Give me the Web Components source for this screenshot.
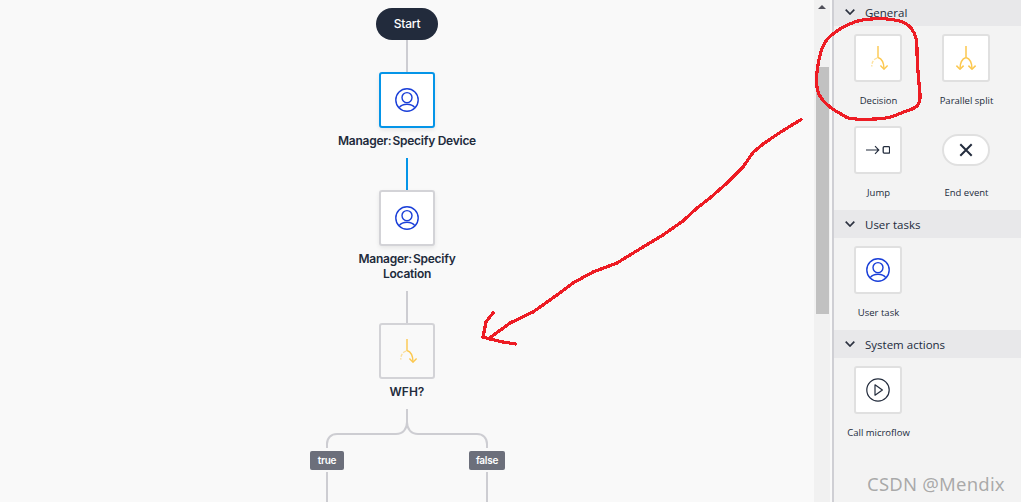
<!DOCTYPE html>
<html lang="en"><head><meta charset="utf-8"><title>Workflow editor</title>
<style>html,body{margin:0;height:502px;overflow:hidden;background:#f9f9f9}</style></head>
<body>
<x-app></x-app>
<script>
const ICONS={
user:`<svg width="24" height="24" viewBox="0 0 24 24" fill="none" stroke="#1a3fd8" stroke-width="1.4"><circle cx="12" cy="12" r="11.2"/><circle cx="12" cy="9.6" r="5"/><path d="M4.2 19.6C6 17.2 8.6 16.3 12 16.3s6 .9 7.8 3.3"/></svg>`,
decision:`<svg width="24" height="24" viewBox="0 0 24 24" fill="none" stroke="#fcc84f" stroke-width="1.4"><path d="M12 0v11.5c3.6 1.2 6 3.6 6 11.5"/><path d="M14.4 19.6l3.6 3.6 3.6-3.6"/><path d="M11 12.2c-3 1-5.2 3.2-5.2 8.2" stroke-opacity=".55" stroke-dasharray="3.2 1.4"/></svg>`,
split:`<svg width="24" height="24" viewBox="0 0 24 24" fill="none" stroke="#fcc84f" stroke-width="1.5"><path d="M12 0v11.5c3.6 1.2 6 3.6 6 11.5M12 11.5C8.4 12.7 6 15.1 6 23"/><path d="M14.4 19.6l3.6 3.6 3.6-3.6M2.4 19.6L6 23.2l3.6-3.6"/></svg>`,
jump:`<svg width="24" height="24" viewBox="0 0 24 24" fill="none" stroke="#232c3d" stroke-width="1.1"><path d="M0 12h12.6M9 8.2l3.8 3.8-3.8 3.8"/><rect x="17.2" y="8.7" width="6.4" height="6.4" rx="1" stroke-width="1.3"/></svg>`,
end:`<svg width="24" height="24" viewBox="0 0 24 24" fill="none" stroke="#232c3d" stroke-width="2"><path d="M6.3 6.3l11.4 11.4M17.7 6.3L6.3 17.7"/></svg>`,
play:`<svg width="24" height="24" viewBox="0 0 24 24" fill="none" stroke="#232c3d" stroke-width="1.2"><circle cx="12" cy="12" r="11.2"/><path d="M9 6.8l7.4 5.2L9 17.2z" stroke-linejoin="round"/></svg>`
};
function def(name,css,html){
  customElements.define(name,class extends HTMLElement{
    connectedCallback(){
      if(this.shadowRoot)return;
      const r=this.attachShadow({mode:'open'});
      r.innerHTML=`<style>${css}</style>`+(typeof html==='function'?html(this):html);
    }
  });
}
const SANS='Inter,"Liberation Sans",sans-serif', UI='"Open Sans","Noto Sans",sans-serif';
function smooth(p){
  const m=(a,b)=>[(a[0]+b[0])/2,(a[1]+b[1])/2];
  const s=m(p[p.length-1],p[0]);
  let d=`M${s[0]} ${s[1]}`;
  p.forEach((q,i)=>{const e=m(q,p[(i+1)%p.length]);d+=`Q${q[0]} ${q[1]} ${e[0]} ${e[1]}`});
  return d+'Z';
}
const RING=[[858,20],[877,18.5],[892,19],[907,23],[915,33],[917,43],[917,60],[919,83],[921,106],[903,112],[887,119],[850,119.500],[843,115],[830,108],[818,95],[816,80],[818,63],[823,43],[837,30]];

def('x-icon',':host{display:block;width:24px;height:24px}svg{display:block}',h=>ICONS[h.getAttribute('name')]);

def('x-start',`:host{display:flex;align-items:center;justify-content:center;box-sizing:border-box;width:62px;height:32px;padding-bottom:2px;margin-top:8px;border-radius:16px;background:#222b3c;color:#fff;font:500 12px/15px ${SANS};letter-spacing:-.2px;flex:none}`,'<slot></slot>');

def('x-connector',`:host{display:block;width:2px;height:32px;background:#cdcdd2;flex:none}:host([active]){background:#0595e8}`,'');

def('x-node',`:host{display:flex;flex-direction:column;align-items:center;width:130px;flex:none}
.box{box-sizing:border-box;width:56px;height:56px;display:flex;align-items:center;justify-content:center;background:#fff;border:2px solid #d3d3d7;border-radius:3px;box-shadow:0 2px 4px rgba(0,0,0,.08)}
:host([selected]) .box{border-color:#0595e8}
:host([plain]) .box{background:#f9f9f9;box-shadow:none}
.label{padding:5px 0 10px;text-align:center;font:600 12px/15px ${SANS};color:#222b3c}
:host([tight]) .label{letter-spacing:-.26px}
:host([wide]){width:170px}`,
h=>`<div class="box"><x-icon name="${h.getAttribute('icon')}"></x-icon></div><div class="label"><slot></slot></div>`);

def('x-thin',`:host{display:inline;word-spacing:-1.6px}`,'<slot></slot>');

def('x-fork',`:host{display:block;width:164px;height:39px;flex:none}svg{display:block}`,
`<svg width="164" height="39" fill="none" stroke="#cdcdd2" stroke-width="2"><path d="M82 0v13c0 7-4 12-11 12H12c-6 0-10 4-10 10v4M82 13c0 7 4 12 11 12h59c6 0 10 4 10 10v4"/></svg>`);

def('x-branch',`:host{display:flex;flex-direction:column;align-items:center;width:160px}
.tag{box-sizing:border-box;min-width:34px;height:19px;padding:0 7px;margin-top:3px;display:flex;align-items:center;justify-content:center;border-radius:2px;background:#6c6f7b;color:#fff;font:600 10px/19px ${SANS};letter-spacing:-.25px}
.line{width:2px;height:40px;margin-top:2px;background:#cdcdd2}`,
`<div class="tag"><slot></slot></div><div class="line"></div>`);

def('x-row',`:host{display:flex;flex:none}`,'<slot></slot>');

def('x-canvas',`:host{display:flex;flex-direction:column;align-items:center;width:814px;height:502px;overflow:hidden;background:#f9f9f9;flex:none}`,'<slot></slot>');

def('x-scrollbar',`:host{display:flex;flex-direction:column;align-items:center;box-sizing:border-box;width:16px;height:502px;background:#f1f1f1;flex:none}
.up{width:0;height:0;border:4px solid transparent;border-top:0;border-bottom:4px solid #50505a;margin-top:5px}
.thumb{width:13px;height:247px;margin-top:58px;background:#c1c1c1}`,
`<div class="up"></div><div class="thumb"></div>`);

def('x-section',`:host{display:block}
.head{height:28px;box-sizing:border-box;padding:2px 0 0 11px;display:flex;align-items:center;gap:10px;background:#e8e8ea;font:500 11.5px/16px ${UI};color:#222b3c}
.head svg{display:block;flex:none;margin-top:-2px}
.grid{display:grid;grid-template-columns:88px 88px;row-gap:17px;padding:8px 0 9px}`,
h=>`<div class="head"><svg width="10" height="6" viewBox="0 0 10 6" fill="none" stroke="#2c3240" stroke-width="1.7"><path d="M.7.7L5 5l4.3-4.3"/></svg><span>${h.getAttribute('title')}</span></div><div class="grid"><slot></slot></div>`);

def('x-tool',`:host{display:flex;flex-direction:column;align-items:center}
.tile{box-sizing:border-box;width:48px;height:48px;display:flex;align-items:center;justify-content:center;background:#fff;border:2px solid #e0e0e0;border-radius:3px}
:host([round]) .tile{height:32px;margin:8px 0;border-radius:16px}
.lab{margin-top:11px;padding-left:1px;font:400 9.5px/16px ${UI};color:#222b3c;white-space:nowrap}`,
h=>`<div class="tile"><x-icon name="${h.getAttribute('icon')}"></x-icon></div><div class="lab"><slot></slot></div>`);

def('x-toolbox',`:host{display:block;box-sizing:border-box;width:189px;height:502px;margin-left:2px;border-left:2px solid #cfcfd4;background:#f3f3f3;overflow:hidden;flex:none}
.in{margin-top:-2px}`,'<div class="in"><slot></slot></div>');

def('x-annotations',`:host{position:absolute;left:0;top:0;width:1021px;height:502px;pointer-events:none}
svg{position:absolute;left:0;top:0}
.mark{position:absolute;left:867px;top:471px;font:400 18.5px/26px "Noto Sans",sans-serif;color:rgba(120,120,120,.6);letter-spacing:.2px;white-space:nowrap}`,
`<svg width="1021" height="502" fill="none" stroke="#ed1c24" stroke-width="3.2" stroke-linejoin="round" stroke-linecap="round" shape-rendering="crispEdges">
<path d="M801 119.500L780 132.500L763 144L753 152.500L743 167L727 183L710 198L697 208L683 221L663 235L643 247L617 263L593 272L573 283L557 295L533 312L510 323L491 337"/>
<path d="M493 313L486 322L483 337L490 339L503 342L516 344"/>
<path d="${smooth(RING)}"/>
</svg><div class="mark">CSDN @Mendix</div>`);

def('x-app',`:host{display:flex;position:relative;width:1021px;height:502px;overflow:hidden}`,
`<x-canvas>
  <x-start>Start</x-start>
  <x-connector></x-connector>
  <x-node icon="user" selected wide tight><x-thin>Manager: </x-thin>Specify Device</x-node>
  <x-connector active></x-connector>
  <x-node icon="user" tight><x-thin>Manager: </x-thin>Specify Location</x-node>
  <x-connector></x-connector>
  <x-node icon="decision" plain>WFH?</x-node>
  <x-fork></x-fork>
  <x-row><x-branch>true</x-branch><x-branch>false</x-branch></x-row>
</x-canvas>
<x-scrollbar></x-scrollbar>
<x-toolbox>
  <x-section title="General">
    <x-tool icon="decision">Decision</x-tool>
    <x-tool icon="split">Parallel split</x-tool>
    <x-tool icon="jump">Jump</x-tool>
    <x-tool icon="end" round>End event</x-tool>
  </x-section>
  <x-section title="User tasks"><x-tool icon="user">User task</x-tool></x-section>
  <x-section title="System actions"><x-tool icon="play">Call microflow</x-tool></x-section>
</x-toolbox>
<x-annotations></x-annotations>`);
</script>
</body></html>
